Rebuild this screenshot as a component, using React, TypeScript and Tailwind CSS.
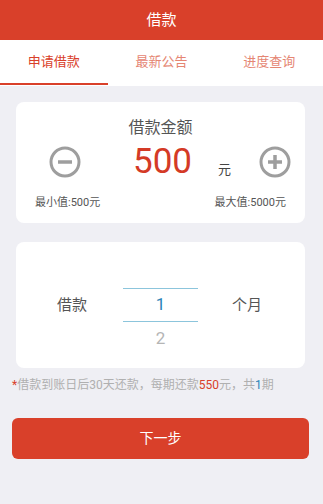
import React from "react";

const RED = "#d9402a";

function MinusIcon() {
  return (
    <svg width="32" height="32" viewBox="0 0 32 32">
      <circle cx="16" cy="16" r="14" fill="none" stroke="#9e9e9e" strokeWidth="3" />
      <line x1="9" y1="16" x2="23" y2="16" stroke="#9e9e9e" strokeWidth="3.5" />
    </svg>
  );
}

function PlusIcon() {
  return (
    <svg width="32" height="32" viewBox="0 0 32 32">
      <circle cx="16" cy="16" r="14" fill="none" stroke="#9e9e9e" strokeWidth="3" />
      <line x1="9" y1="16" x2="23" y2="16" stroke="#9e9e9e" strokeWidth="3.5" />
      <line x1="16" y1="9" x2="16" y2="23" stroke="#9e9e9e" strokeWidth="3.5" />
    </svg>
  );
}

export default function App() {
  return (
    <div
      className="w-[323px] h-[504px] bg-[#efeff4] flex flex-col"
      style={{ fontFamily: 'Roboto, "Noto Sans CJK SC", sans-serif' }}
    >
      <div className="h-10 bg-[#d9402a] flex items-center justify-center text-white text-[15px]">
        借款
      </div>
      <div className="h-[46px] bg-white flex pb-[1px]">
        <div className="flex-1 flex items-center justify-center text-[13px] text-[#d9402a] border-b-2 border-[#d9402a] pt-[1px]">
          申请借款
        </div>
        <div className="flex-1 flex items-center justify-center text-[13px] text-[#e58673] border-b-2 border-transparent pt-[1px]">
          最新公告
        </div>
        <div className="flex-1 flex items-center justify-center text-[13px] text-[#e58673] border-b-2 border-transparent pt-[1px]">
          进度查询
        </div>
      </div>

      <div className="mt-4 ml-4 mr-[18px] bg-white rounded-lg pt-4 pb-[13px] flex flex-col">
        <div className="text-center text-[16px] leading-5 text-[#555]">借款金额</div>
        <div className="mt-2 h-8 flex items-center pl-[33px]">
          <MinusIcon />
          <div className="ml-[52px] text-[35px] leading-8 text-[#d43a26]">500</div>
          <div className="ml-[26px] mt-4 text-[13px] leading-4 text-[#444]">元</div>
          <div className="ml-[28px]">
            <PlusIcon />
          </div>
        </div>
        <div className="mt-[18px] flex justify-between px-[19px] text-[11px] leading-[14px] text-[#555]">
          <span>最小值:500元</span>
          <span>最大值:5000元</span>
        </div>
      </div>

      <div className="mt-[19px] ml-4 mr-[18px] bg-white rounded-lg py-3 flex items-center pl-[41px]">
        <div className="text-[15px] text-[#555]">借款</div>
        <div className="ml-[36px] w-[75px] flex flex-col">
          <div className="h-[34px]" />
          <div className="h-[34px] border-t border-b border-[#8cc5dc] flex items-center justify-center text-[17px] text-[#2d84b8]">
            1
          </div>
          <div className="h-[34px] flex items-center justify-center text-[17px] text-[#b5b5b5]">2</div>
        </div>
        <div className="ml-[34px] text-[15px] text-[#555]">个月</div>
      </div>

      <div className="mt-[9px] pl-3 text-[12px] leading-[17px] text-[#b0b0b0] whitespace-nowrap">
        <span className="text-[#d9402a]">*</span>借款到账日后30天还款，每期还款
        <span className="text-[#d9402a]">550</span>元，共<span className="text-[#2d84b8]">1</span>期
      </div>

      <div className="mt-6 ml-3 mr-[14px] h-[41px] rounded-md bg-[#d9402a] flex items-center justify-center text-white text-[14px]">
        下一步
      </div>
    </div>
  );
}
